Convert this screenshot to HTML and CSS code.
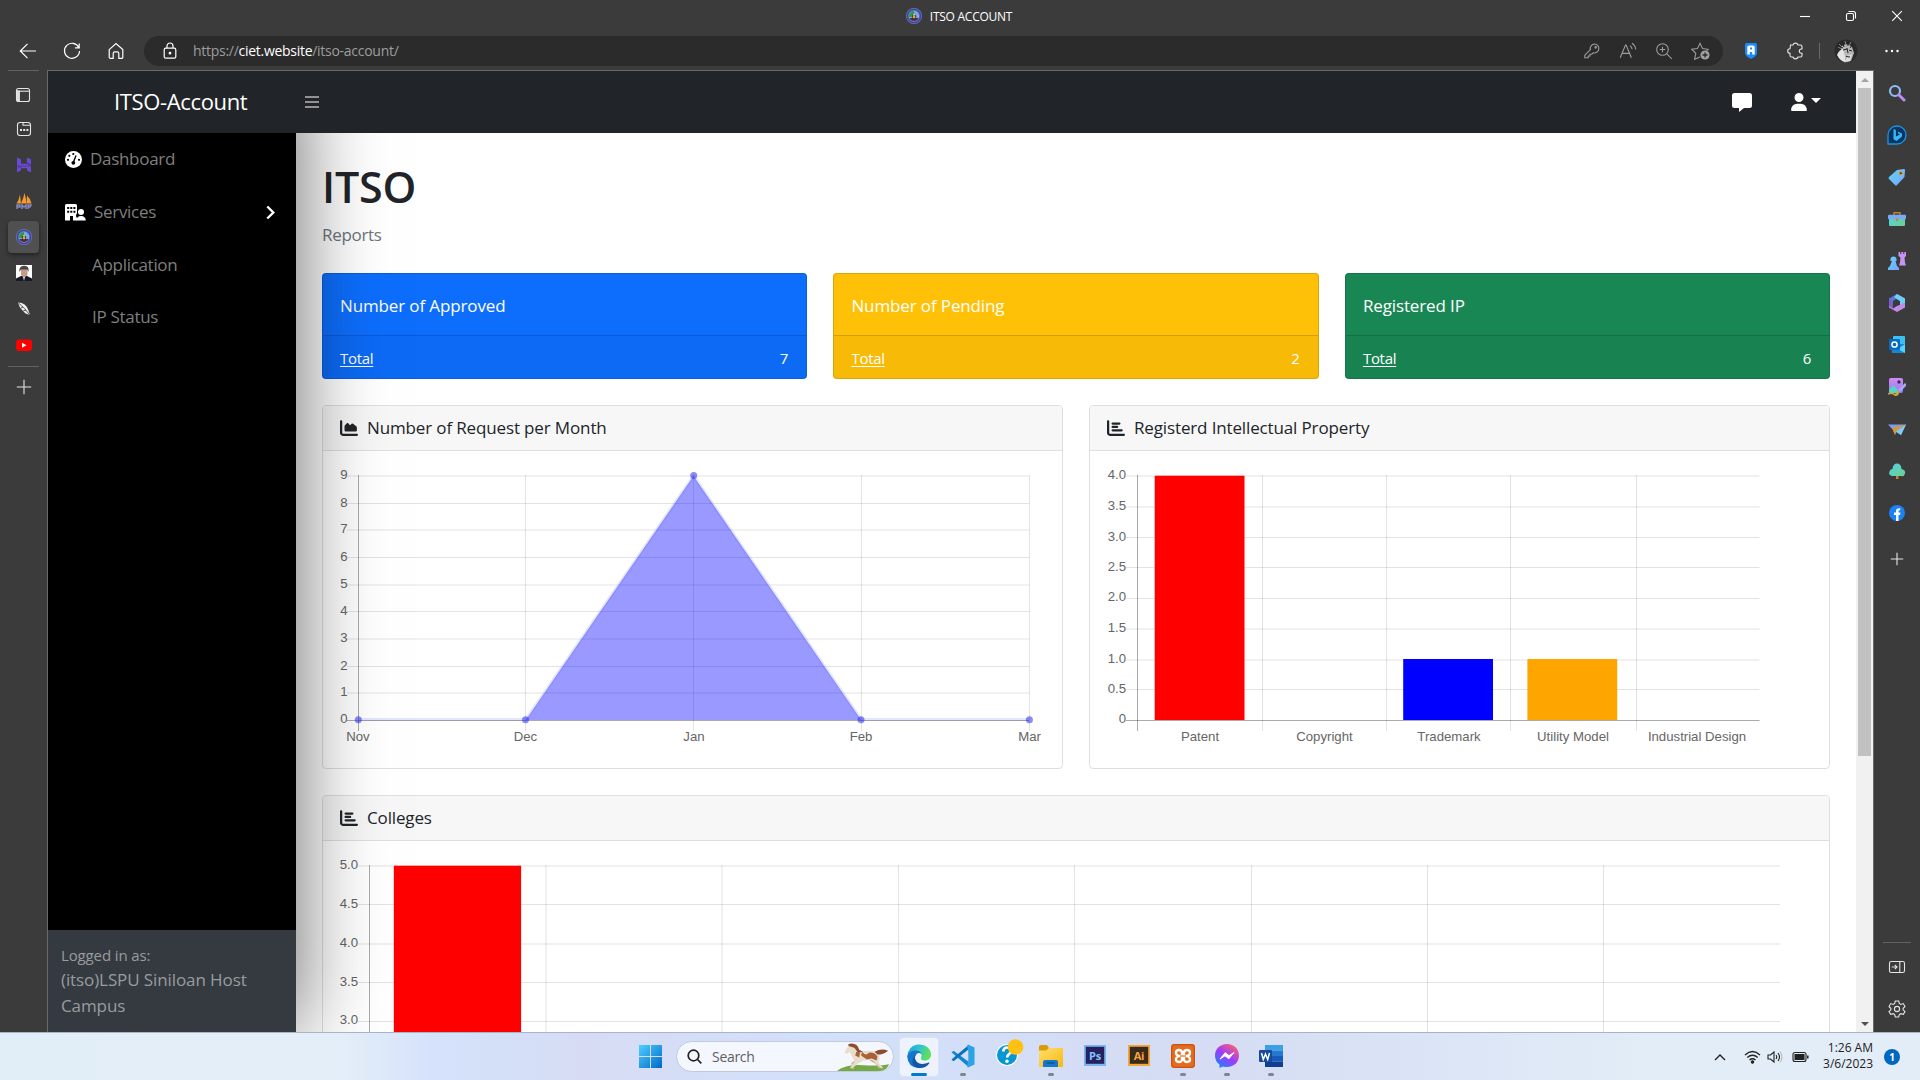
FILE: index.html
```html
<!DOCTYPE html>
<html lang="en">
<head>
<meta charset="utf-8">
<title>ITSO ACCOUNT</title>
<link rel="stylesheet" href="styles.css">
</head>
<body>
<svg class="defs" width="0" height="0" aria-hidden="true">
  <defs>
    <linearGradient id="gBlue" x1="0" y1="0" x2="1" y2="1"><stop offset="0" stop-color="#4fd0ff"/><stop offset="1" stop-color="#0067c8"/></linearGradient>
    <linearGradient id="gSky" x1="0" y1="0" x2="1" y2="1"><stop offset="0" stop-color="#5fd4f5"/><stop offset="1" stop-color="#7aa5ff"/></linearGradient>
    <linearGradient id="gPurple" x1="0" y1="0" x2="0" y2="1"><stop offset="0" stop-color="#d58af5"/><stop offset="1" stop-color="#8f7bf0"/></linearGradient>
    <linearGradient id="gTeal" x1="0" y1="0" x2="1" y2="1"><stop offset="0" stop-color="#4fd3e8"/><stop offset="1" stop-color="#6fd08a"/></linearGradient>
    <linearGradient id="gEdge" x1="0" y1="0" x2="1" y2="0.3"><stop offset="0" stop-color="#1b9de0"/><stop offset=".5" stop-color="#2cc4d0"/><stop offset="1" stop-color="#5ee05a"/></linearGradient>
    <linearGradient id="gMsg" x1="0.1" y1="1" x2="0.8" y2="0"><stop offset="0" stop-color="#0a8dff"/><stop offset=".5" stop-color="#9a3cff"/><stop offset="1" stop-color="#ff6270"/></linearGradient>
    <linearGradient id="gFolder" x1="0" y1="0" x2="1" y2="1"><stop offset="0" stop-color="#ffdf6b"/><stop offset="1" stop-color="#f7b913"/></linearGradient>
    <symbol id="seal" viewBox="0 0 16 16"><circle cx="8" cy="8" r="8" fill="#6b75b8"/><circle cx="8" cy="8" r="6.600" fill="none" stroke="#3a46a0" stroke-width="1.400"/><circle cx="8" cy="8" r="5.200" fill="#7ba7e6"/><path d="M3 9a5.200 5.200 0 0 1 5-6.200V9z" fill="#2f9a4c"/><path d="M3.400 10h9.200a5 5 0 0 1-9.200 0z" fill="#5a2433"/><circle cx="8" cy="8.500" r="2.200" fill="#3e4a3a"/><circle cx="8" cy="9" r="1.200" fill="#e0b13c"/><circle cx="8" cy="6.800" r=".9" fill="#e8e3c0"/></symbol>
    <symbol id="bars" viewBox="0 0 512 512"><path d="M32 32c18 0 32 14 32 32v336c0 9 7 16 16 16h400c18 0 32 14 32 32s-14 32-32 32H80c-44 0-80-36-80-80V64c0-18 14-32 32-32z"/><path d="M128 128c0-18 14-32 32-32h192a32 32 0 0 1 0 64H160c-18 0-32-14-32-32zm32 64h128a32 32 0 0 1 0 64H160a32 32 0 0 1 0-64zm0 96h256a32 32 0 0 1 0 64H160a32 32 0 0 1 0-64z"/></symbol>
  </defs>
</svg>

<div class="screen">
  <header class="titlebar">
    <div class="tab-title"><svg width="16" height="16"><use href="#seal"/></svg><span>ITSO ACCOUNT</span></div>
    <div class="window-controls">
      <svg viewBox="0 0 12 12"><path d="M1 6.500h10"/></svg>
      <svg viewBox="0 0 12 12"><rect x="1.500" y="3.500" width="7" height="7" rx="1.500"/><path d="M3.500 1.500h4.800a2.200 2.200 0 0 1 2.200 2.200v4.800"/></svg>
      <svg viewBox="0 0 12 12"><path d="M1.200 1.200l9.600 9.600M10.800 1.200l-9.600 9.600"/></svg>
    </div>
  </header>

  <div class="toolbar">
    <div class="nav-buttons">
      <svg viewBox="0 0 18 18"><path d="M17 9H1.500M8.500 1.800L1.300 9l7.200 7.200"/></svg>
      <svg viewBox="0 0 18 18"><path d="M15.800 5.600A7.500 7.500 0 1 0 16.500 9M16.200 1.500v4.300h-4.300"/></svg>
      <svg viewBox="0 0 18 18"><path d="M2.200 7.600L9 1.600l6.800 6v7.600a1.200 1.200 0 0 1-1.200 1.200h-2.800v-5a1.600 1.600 0 0 0-1.600-1.600H7.800a1.600 1.600 0 0 0-1.600 1.600v5H3.400a1.200 1.200 0 0 1-1.200-1.200z"/></svg>
    </div>
    <div class="omnibox">
      <svg class="lock" viewBox="0 0 16 18"><rect x="2.200" y="6.200" width="11.600" height="10" rx="1.500"/><path d="M5 6V4a3 3 0 0 1 6 0v2"/><circle cx="8" cy="11.200" r=".8" fill="#fff"/></svg>
      <span class="url">https://<b>ciet.website</b>/itso-account/</span>
      <div class="omni-actions">
        <svg viewBox="0 0 18 18"><path d="M11.500 2a4.500 4.500 0 1 1-1.400 8.800l-1.300 1.400H7v1.800H5.200v1.800H1.800v-2.600l5.600-5.600A4.500 4.500 0 0 1 11.500 2z"/><circle cx="12.700" cy="5.300" r=".8"/></svg>
        <svg viewBox="0 0 18 18"><path d="M1.200 15.800L6.500 3h.6l5.300 12.800M3.200 11.400h7.300M11 3.600c1.300.9 2 2 2.100 3.700M13 1.200c2.300 1.500 3.600 3.500 3.700 6.200"/></svg>
        <svg viewBox="0 0 18 18"><circle cx="7.500" cy="7.500" r="5.800"/><path d="M11.800 11.800l5 5M4.800 7.500h5.400M7.500 4.800v5.400"/></svg>
        <svg class="fav" viewBox="0 0 20 18"><path d="M9 15l-5.400 2.300 1.200-6L.9 7.300l5.600-.7L9 1.300l2.500 5.300 5.600.7-1.500 1.500"/><circle cx="14" cy="13" r="4.600" fill="#a0a0a0" stroke="none"/><path d="M14 10.500v5M11.500 13h5" stroke="#2b2b2b" stroke-width="1.300"/></svg>
      </div>
    </div>
    <div class="extensions">
      <svg viewBox="0 0 16 16"><path d="M2 1.500Q2 0 3.500 0h9Q14 0 14 1.500V10q0 3-6 6-6-3-6-6z" fill="#1a8cff"/><path d="M4.300 11.500v-8l1.500-1h4.400l1.500 1v8H9.200V9H6.800v2.500zM7 4.500v2h2v-2z" fill="#fff" fill-rule="evenodd"/></svg>
      <svg class="line" viewBox="0 0 18 18"><path d="M3.500 3H6a2.600 2.600 0 0 1 5 0h2.500Q15 3 15 4.500V7h-.6a2.100 2.100 0 0 0 0 4.200h.6v2.300q0 1.500-1.500 1.500H11a2.600 2.600 0 0 1-5 0H4.500Q3 15 3 13.500V11.300a2.300 2.300 0 0 1 0-4.600z"/></svg>
      <i class="divider"></i>
      <svg class="avatar" viewBox="0 0 24 24"><circle cx="12" cy="12" r="11.500" fill="#2a2a2a"/><path d="M8 7q5-4 10 1l2 6-3 8-6 1.500-6-5z" fill="#b5b5b5"/><path d="M3 16q2-5 6-6l2 7 0 6q-5-1-8-7z" fill="#e4e4e4"/><path d="M13 17l5-2-2 7-5 1z" fill="#dcdcdc"/><path d="M9 11l4-1M15 11l3 1M12 17.500l4 .5M13 9l1 5M3 6l6 3M8 2l2 6M14 1v6M19 5l-3 4" stroke="#222" stroke-width="1"/><path d="M4 8l4 2M5 5l3 3M11 2l1 5M17 3l-2 4" stroke="#999" stroke-width=".8"/></svg>
      <svg class="dots" viewBox="0 0 16 4"><circle cx="2.500" cy="2" r="1.200"/><circle cx="8" cy="2" r="1.200"/><circle cx="13.500" cy="2" r="1.200"/></svg>
    </div>
  </div>

  <div class="workspace">
    <nav class="tab-strip">
      <div class="tab"><svg class="line" viewBox="0 0 16 16"><rect x="1.500" y="1.500" width="13" height="13" rx="2"/><path d="M1.500 4.200h13"/><path d="M1.500 4h2.800v10H2.500z" fill="#ddd"/></svg></div>
      <div class="tab"><svg class="line" viewBox="0 0 16 16"><rect x="1.500" y="1.500" width="13" height="13" rx="2.500"/><path d="M7 1.500v2.700h7.500"/><path d="M4 9h2M7.200 9h2M10.400 9h2" stroke-width="1.800"/></svg></div>
      <div class="tab"><svg viewBox="0 0 16 16" fill="#6b48d8"><path d="M1 .5l4 2v4.200h6l4 2H1zM11 .5l4 2v5.200l-4-2zM1 8.700v6.800l4-2.200v-2.800zM1 9.200h14v6.300l-4-2v-2.200H5z"/></svg></div>
      <div class="tab"><svg viewBox="0 0 16 16"><path d="M.5 10.500Q3 7 4 1.500l1 9zM5 10.500Q7.500 5 8.500 0q2 6 1.800 10.500zM10.500 10.500l.5-8q3.500 3 4.500 8z" fill="#f29a2e"/><path d="M1 16v-4h3v2H1M6 16v-4l2 2 2-2v4M12 16v-4h3l-1 2h-2" fill="none" stroke="#8586bd" stroke-width="1.500"/></svg></div>
      <div class="tab active"><svg viewBox="0 0 16 16"><use href="#seal"/></svg></div>
      <div class="tab"><svg viewBox="0 0 16 16"><path d="M0 0h16v16H0z" fill="#fff"/><path d="M0 16v-2.500L5 11h6l5 2.500V16z" fill="#171a26"/><path d="M5 4h6.500v6L8 13l-3-3z" fill="#c59a87"/><path d="M3.500 7Q2.500 1 8 .7T12.500 7l-1.200-2.500H5z" fill="#4a4748"/><path d="M7 12h2l-1 4z" fill="#ddd"/></svg></div>
      <div class="tab"><svg viewBox="0 0 16 16"><path d="M2 1.500q8 0 10.500 8L14 14q-5-1-7.500-4.500Q3 6 2 1.500z" fill="#eee"/><path d="M2.500 2Q9 7 14.500 15M5 7l2-1M7 10l3-1" stroke="#333" fill="none" stroke-width=".8"/></svg></div>
      <div class="tab"><svg viewBox="0 0 16 16"><rect y="2.500" width="16" height="11.500" rx="3" fill="#f00"/><path d="M6 5.700v5l4.500-2.500z" fill="#fff"/></svg></div>
      <i class="strip-rule"></i>
      <div class="tab add"><svg class="line" viewBox="0 0 16 16"><path d="M8 .8v14.400M.8 8h14.400"/></svg></div>
    </nav>

    <div class="page">
      <div class="site">
        <nav class="topnav">
          <span class="brand">ITSO-Account</span>
          <svg class="burger" viewBox="0 0 14 12"><path d="M0 1h14M0 6h14M0 11h14"/></svg>
          <svg class="chat" viewBox="0 0 20 19"><path d="M2.500 0h15Q20 0 20 2.500v10q0 2.500-2.500 2.500H12l-5 4v-4H2.500Q0 15 0 12.500v-10Q0 0 2.500 0z"/></svg>
          <svg class="user" viewBox="0 0 448 512"><path d="M224 256a128 128 0 1 0 0-256 128 128 0 1 0 0 256zm-46 48C80 304 0 384 0 482c0 16 13 30 30 30h388c17 0 30-14 30-30 0-98-80-178-178-178z"/></svg>
          <i class="caret"></i>
        </nav>
        <div class="content">
          <aside class="sidenav">
            <ul class="menu">
              <li><svg width="17" height="17" viewBox="0 0 17 17"><circle cx="8.500" cy="8.500" r="8.500" fill="#fff"/><path d="M8.500 11L11 4.500" stroke="#000" stroke-width="1.400"/><circle cx="8.300" cy="11.800" r="1.900"/><circle cx="8.300" cy="3" r="1.100"/><circle cx="4.300" cy="4.800" r="1.100"/><circle cx="3" cy="8.800" r="1.100"/><circle cx="14" cy="8.800" r="1.100"/></svg><span>Dashboard</span></li>
              <li><svg width="21" height="17" viewBox="0 0 21 17"><path d="M1.500 0h9Q12 0 12 1.500V9q-2 3 0 5v2.500H8V12H5v4.500H0v-15Q0 0 1.500 0z" fill="#fff"/><path d="M2.200 3h2v2h-2zm3.100 0h2v2h-2zm3.100 0h2v2h-2zM2.200 6.800h2v2h-2zm3.100 0h2v2h-2zm3.100 0h2v2h-2z"/><circle cx="16" cy="8" r="3" fill="#fff"/><path d="M11.500 16.500q0-4.500 4.500-4.500t4.800 4.500z" fill="#fff"/></svg><span>Services</span><svg class="chevron" viewBox="0 0 9 15"><path d="M1.300 1.500l6 6-6 6"/></svg></li>
              <li class="sub"><span>Application</span></li>
              <li class="sub"><span>IP Status</span></li>
            </ul>
            <div class="login"><small>Logged in as:</small><span>(itso)LSPU Siniloan Host Campus</span></div>
          </aside>

          <main>
            <h1>ITSO</h1>
            <p class="crumb">Reports</p>
            <div class="stats">
              <section class="stat blue"><h2>Number of Approved</h2><div><a>Total</a><span>7</span></div></section>
              <section class="stat yellow"><h2>Number of Pending</h2><div><a>Total</a><span>2</span></div></section>
              <section class="stat green"><h2>Registered IP</h2><div><a>Total</a><span>6</span></div></section>
            </div>
            <div class="charts">
              <section class="card">
                <h3><svg viewBox="0 0 512 512"><path d="M32 32c18 0 32 14 32 32v336c0 9 7 16 16 16h400c18 0 32 14 32 32s-14 32-32 32H80c-44 0-80-36-80-80V64c0-18 14-32 32-32z"/><path d="M128 330V206q0-12 8-22l58-66q20-20 40 0l36 42q18 16 32 0l28-26q22-18 42 4l96 76q12 10 12 26v90q0 22-22 22H150q-22 0-22-22z"/></svg><span>Number of Request per Month</span></h3>
                <svg class="chart" viewBox="323 451 739 317" width="739" height="317">
                  <g class="grid"><path d="M347 476h682M347 503.500h682M347 530h682M347 557.500h682M347 585h682M347 611.500h682M347 639h682M347 666.500h682M347 693h682"/><path d="M525.500 475v256M693.500 475v256M861.500 475v256M1029.500 475v256"/></g>
                  <path class="zero" d="M358.500 475v256M347 720.500h682"/>
                  <path d="M525.800 720L693.500 476 861.200 720z" class="area"/>
                  <path d="M358.700 719.500H525.800L693.500 476 861.200 719.500H1029" class="trend"/>
                  <g class="points"><circle cx="358.300" cy="719.700" r="3.500"/><circle cx="525.500" cy="719.700" r="3.500"/><circle cx="693.700" cy="475.500" r="3.500"/><circle cx="861" cy="719.700" r="3.500"/><circle cx="1029.400" cy="719.700" r="3.500"/></g>
                  <g class="ylab"><text x="347.500" y="479">9</text><text x="347.500" y="507">8</text><text x="347.500" y="533">7</text><text x="347.500" y="561">6</text><text x="347.500" y="588">5</text><text x="347.500" y="615">4</text><text x="347.500" y="642">3</text><text x="347.500" y="670">2</text><text x="347.500" y="696">1</text><text x="347.500" y="723">0</text></g>
                  <g class="xlab"><text x="358" y="741">Nov</text><text x="525.500" y="741">Dec</text><text x="694" y="741">Jan</text><text x="861" y="741">Feb</text><text x="1029.500" y="741">Mar</text></g>
                </svg>
              </section>
              <section class="card">
                <h3><svg><use href="#bars"/></svg><span>Registerd Intellectual Property</span></h3>
                <svg class="chart" viewBox="1090 451 739 317" width="739" height="317">
                  <g class="grid"><path d="M1126 476h633.500M1126 507h633.500M1126 537.500h633.500M1126 567.500h633.500M1126 598.500h633.500M1126 629h633.500M1126 660h633.500M1126 689.500h633.500"/><path d="M1262.500 475v256M1386.500 475v256M1510.500 475v256M1636.500 475v256"/></g>
                  <path class="zero" d="M1137.500 475v256M1126 720.500h633.500"/>
                  <rect x="1154.700" y="475.700" width="89.800" height="244.300" fill="#f00"/><rect x="1403.200" y="659" width="89.800" height="61" fill="#00f"/><rect x="1527.400" y="659" width="89.800" height="61" fill="#ffa500"/>
                  <g class="ylab"><text x="1126" y="479">4.0</text><text x="1126" y="510">3.5</text><text x="1126" y="541">3.0</text><text x="1126" y="571">2.5</text><text x="1126" y="601">2.0</text><text x="1126" y="632">1.5</text><text x="1126" y="663">1.0</text><text x="1126" y="693">0.5</text><text x="1126" y="723">0</text></g>
                  <g class="xlab"><text x="1200" y="741">Patent</text><text x="1324.500" y="741">Copyright</text><text x="1449" y="741">Trademark</text><text x="1573" y="741">Utility Model</text><text x="1697" y="741">Industrial Design</text></g>
                </svg>
              </section>
              <section class="card wide">
                <h3><svg><use href="#bars"/></svg><span>Colleges</span></h3>
                <svg class="chart" viewBox="323 841 1506 300" width="1506" height="300">
                  <g class="grid"><path d="M358 866h1422M358 904.500h1422M358 944h1422M358 982.500h1422M358 1021.500h1422"/><path d="M546 865v270M722 865v270M898.500 865v270M1074.500 865v270M1251.500 865v270M1427.500 865v270M1603.500 865v270"/></g>
                  <path class="zero" d="M369.500 865v270"/>
                  <rect x="393.800" y="865.700" width="127.300" height="270" fill="#f00"/>
                  <g class="ylab"><text x="358" y="869">5.0</text><text x="358" y="908">4.5</text><text x="358" y="947">4.0</text><text x="358" y="986">3.5</text><text x="358" y="1024">3.0</text></g>
                </svg>
              </section>
            </div>
          </main>
        </div>
      </div>
      <div class="scrollbar"><i class="up"></i><i class="thumb"></i><i class="down"></i></div>
    </div>

    <aside class="edge-sidebar">
      <svg viewBox="0 0 18 18"><circle cx="7" cy="7" r="5" fill="none" stroke="#8fbcf5" stroke-width="2.200"/><path d="M11 11l5 5" stroke="#c48af0" stroke-width="3" stroke-linecap="round"/></svg>
      <svg class="big" viewBox="0 0 20 20"><path d="M1 19V10a9 9 0 1 1 9 9z" fill="#0b3560" stroke="#1596e8" stroke-width="1.300"/><path d="M6.500 4l2.400.9v6.500l4.100-2-1.700-.8-.8-2 4.500 1.800v3.200L9.500 16l-3-1.800z" fill="#35b8f5"/></svg>
      <svg viewBox="0 0 18 18"><path d="M9 2l7-1q1 0 1 1l-.5 7L9 17q-1 1-2 0l-6-6q-1-1 0-2z" fill="url(#gSky)"/><circle cx="12.800" cy="5.200" r="1.700" fill="#6b4b10" stroke="#e9a826"/></svg>
      <svg viewBox="0 0 18 18"><path d="M6 5V2.800h6V5" fill="none" stroke="#c28420" stroke-width="1.400"/><rect x="1" y="7" width="16" height="9" rx="1" fill="url(#gTeal)"/><rect y="4.800" width="18" height="4.500" rx="1" fill="#79aaf5"/><circle cx="9" cy="9.700" r="1.500" fill="#c88c20"/></svg>
      <svg viewBox="0 0 18 18"><path d="M10.500 0h1.800v2h1V0h2v2h1V0H18v4l-1.500 1.500.5 5 1 3h-7l1-3 .5-5L10.500 4z" fill="#c993f4"/><path d="M0 18v-2l2-2 2-5H2.500V7.500a3 3 0 1 1 6 0V9H7.500l1.500 5 2 2v2z" fill="url(#gSky)"/></svg>
      <svg viewBox="0 0 18 18"><path d="M9 0l8 4.500V10l-5-3-4-2-3 2v7L1 11.500v-7z" fill="#5579de"/><path d="M9 0l8 4.500V9l-5 3V7L6 3z" fill="#72cff4"/><path d="M1 11.500l4 3 4-2.500 8-3v4.500L9 18l-8-4.500z" fill="#c18aeb"/><path d="M1 5l4 2v6.500l-4-1.500z" fill="#7760cd"/></svg>
      <svg viewBox="0 0 18 18"><rect x="5" y="0" width="12" height="10" rx="1" fill="#3ac3f2"/><path d="M3 8h14v9H4z" fill="#1686d6"/><path d="M17 8l-7 5 7 4z" fill="#53d7ff"/><rect x="1" y="3" width="11" height="11" rx="1" fill="#0869c3"/><circle cx="6.500" cy="8.500" r="2.600" fill="none" stroke="#fff" stroke-width="1.500"/></svg>
      <svg viewBox="0 0 18 18"><rect x="1" width="14" height="15" rx="2" fill="url(#gPurple)"/><path d="M1 12l4-5 5 5v3H1z" fill="#57d2c5"/><circle cx="11" cy="4" r="1.700" fill="#353253"/><path d="M18 6l-7 7" stroke="#a5a7f7" stroke-width="2.800"/><path d="M0 16q4-2 7 1l3-3q1 3-3 3.500" stroke="#dda236" stroke-width="1.500" fill="none"/></svg>
      <svg viewBox="0 0 18 18"><path d="M0 4.500h18L13 15l-5-3-1 3-2-5z" fill="#7f9cf0"/><path d="M4 8l14-3.500-10 7-1 3.500-2-5z" fill="#d79935"/><path d="M18 4.500L13 15l-5-3.500z" fill="#7ccbf8"/></svg>
      <svg viewBox="0 0 18 18"><path d="M8 11h2.500v6H8z" fill="#c88723"/><path d="M4 14q-4-1-2.500-4.500Q2 7 4.500 7 5 1.500 9 1.500T13.500 7Q18 8 17 11.500T13 14z" fill="url(#gTeal)"/></svg>
      <svg viewBox="0 0 18 18"><circle cx="9" cy="9" r="8" fill="#1b83f5"/><path d="M8 17v-6H6V8.500h2V7q0-3.200 4.200-2.800v2Q10.500 6 10.500 7.500v1h2L12 11h-1.500v6z" fill="#fff"/></svg>
      <svg class="line plus" viewBox="0 0 14 14"><path d="M7 .8v12.400M.8 7h12.400"/></svg>
      <i class="strip-rule"></i>
      <svg class="line" viewBox="0 0 18 18"><rect x="1.500" y="3.500" width="15" height="11" rx="1.800"/><path d="M11.800 3.500v11M3.800 9h5M6.800 6.800L9 9l-2.200 2.200"/></svg>
      <svg class="line" viewBox="0 0 18 18"><path d="M7.300 1h3.400l.6 2.500 1.500.9 2.500-.8L17 6.600l-1.900 1.700v1.500L17 11.500l-1.700 2.900-2.500-.7-1.500.8-.6 2.500H7.300l-.6-2.500-1.500-.8-2.500.7L1 11.500l1.900-1.700V8.300L1 6.600l1.700-3 2.500.8 1.500-.9z"/><circle cx="9" cy="9" r="2.600"/></svg>
    </aside>
  </div>

  <footer class="taskbar">
    <svg class="start" viewBox="0 0 23 23"><path d="M0 0h11v11H0zM12 0h11v11H12zM0 12h11v11H0zM12 12h11v11H12z" fill="url(#gBlue)"/></svg>
    <div class="search">
      <svg class="lens" viewBox="0 0 15 15"><circle cx="6.500" cy="6.500" r="5.300"/><path d="M10.500 10.500l3.800 3.800"/></svg>
      <span>Search</span>
      <svg class="horse" viewBox="0 0 54 30"><path d="M0 29q9-7 27-6T54 22q-2 5-7 7z" fill="#75a945"/><path d="M34 17l7 4 3 5M21 18l-5 3 1 6" fill="none" stroke="#c9b096" stroke-width="1.800"/><path d="M8 10l3-6 4-3 5 4 5 4q8-2 15 0l4 3 0 5-1 3 5 6h-2.500l-5.500-5-3-4-9 1-6 3-6 5h-2.500l5-7-3-5-2-5-3 2z" fill="#eadccb"/><path d="M26 9q4 5 7 1 6-1 9 4l-1 4-5-2-5 1-6-4zM20 9l4 1-1 5-4-2z" fill="#a86239"/><path d="M12 1q9-2 11 6l4 2-5 1-4-5-6-2zM39 9q7-4 14-1-5 4-11 4z" fill="#894e32"/></svg>
    </div>
    <div class="apps">
      <div class="app current"><svg viewBox="0 0 24 24"><path d="M.5 13A11.500 11.500 0 0 1 12 .5C19 .5 24 5 24 10.500c0 4-3 6-6.500 6-2.500 0-4-1-3.500-2.500 1-2 1-5-3-6C6 6.800 2 9 .5 13z" fill="url(#gEdge)"/><path d="M.2 12.500Q2 7 7.500 6.600 13 6.400 14.800 10q-3-2-5.300 0-3 3-.5 7.500 3 4.500 12.500 2Q17 24.500 11 24 1 23 .2 12.500z" fill="#1577cb"/><path d="M9.500 10q-3 3-.5 7 4 5 13 1.500.8 0 .2 1Q19 24 12 24 3 22 6 14q1-3 3.500-4z" fill="#1358a4"/></svg></div>
      <div class="app open"><svg viewBox="0 0 24 24"><path d="M17.500 23L2.500 10 .5 8.500 2.500 6.800 18 18z" fill="#1286d2"/><path d="M.5 15.500l2 1.700L18 5V.8z" fill="#0870bd"/><path d="M17 .5l6.500 3v17l-6.500 3-1-1.500 1.300-5V7L16 2z" fill="#2ca3e8"/></svg></div>
      <div class="app"><svg class="help" viewBox="0 0 28 28"><circle cx="11" cy="16" r="11" fill="#fff"/><circle cx="11" cy="16" r="10" fill="#0796d4"/><path d="M7.200 12.500q.4-4 4-4t4 3.200q0 2-2.200 3.500-1.800 1.200-1.800 3.300" fill="none" stroke="#fff" stroke-width="2.700"/><circle cx="11" cy="22.300" r="1.700" fill="#fff"/><circle cx="19.500" cy="8" r="7.800" fill="#ffc012"/></svg></div>
      <div class="app open"><svg viewBox="0 0 24 24"><path d="M0 3q0-2 2-2h6l2 3v4H0z" fill="#d99a0b"/><path d="M0 6.500h7L10 4h14v19H0z" fill="url(#gFolder)"/><path d="M4 23v-5q0-2 2-2h11q2 0 2 2v5z" fill="#1477cb"/><path d="M7.500 19h8" stroke="#07559c" stroke-width="1.500"/></svg></div>
      <div class="app"><svg viewBox="0 0 24 24"><rect x="1" y="1" width="22" height="21" fill="#78b6ef"/><rect x="2.800" y="2.800" width="18.400" height="17" fill="#27205f"/><text class="adobe ps" x="12" y="15.500">Ps</text></svg></div>
      <div class="app"><svg viewBox="0 0 24 24"><rect x="1" y="1" width="22" height="21" fill="#f4a638"/><rect x="2.800" y="2.800" width="18.400" height="17" fill="#3a2a1b"/><text class="adobe ai" x="12" y="15.500">Ai</text></svg></div>
      <div class="app open"><svg viewBox="0 0 24 24"><rect width="24" height="24" rx="3" fill="#e66b1c"/><rect x=".7" y=".7" width="22.600" height="22.600" rx="2.500" fill="none" stroke="#c04f0f"/><path d="M8 12q-3-1-3-3.300Q5 6 8 6t3 3v6q0 3-3 3t-3-2.700Q5 13 8 12h8q3-1 3-3.300Q19 6 16 6t-3 3v6q0 3 3 3t3-2.700Q19 13 16 12" fill="none" stroke="#fff" stroke-width="2.300"/><path d="M9 12h6" stroke="#e66b1c" stroke-width="1.200"/></svg></div>
      <div class="app open"><svg viewBox="0 0 24 24"><path d="M12 0c7 0 12 5 12 11.500S19 23 12 23q-2 0-4-.6L4.500 24V20.500Q0 17.500 0 11.500C0 5 5 0 12 0z" fill="url(#gMsg)"/><path d="M5 15l5.200-6.300 3.800 3 5-3.200-5.200 6.300-3.800-3z" fill="#fff" stroke="#fff"/></svg></div>
      <div class="app open"><svg viewBox="0 0 24 24"><path d="M6 1h18v5.500H6z" fill="#3ba0e6"/><path d="M6 6.500h18V12H6z" fill="#2378d0"/><path d="M6 12h18v5.500H6z" fill="#165bbb"/><path d="M6 17.500h18V23H6z" fill="#103f91"/><rect y="6" width="13" height="12" rx="1" fill="#174a9c"/><path d="M2.500 9l1.800 6.500L6.500 10l2.200 5.500L10.500 9" fill="none" stroke="#fff" stroke-width="1.500"/></svg></div>
    </div>
    <div class="tray">
      <svg width="12" height="8" viewBox="0 0 12 8"><path d="M1 7l5-5 5 5" stroke-width="1.400"/></svg>
      <svg width="17" height="14" viewBox="0 0 17 14"><path d="M1 5q7.500-7 15 0M3.300 7.500q5.200-4.600 10.400 0M5.500 10q3-2.600 6 0" stroke-width="1.300"/><circle cx="8.500" cy="12" r="1.200" fill="#222"/></svg>
      <svg width="17" height="14" viewBox="0 0 17 14"><path d="M1 5h2.500L7 2v10L3.500 9H1zM9 5q1.500 2 0 4M11 3q3 4 0 8"/><path d="M13 1.500q4 5.500 0 11" stroke="#bbb"/></svg>
      <svg width="17" height="12" viewBox="0 0 17 12"><rect x="1" y="1.500" width="13" height="9" rx="2"/><path d="M3 3.500h9v5H3z" fill="#222"/><path d="M15.800 4.500v3" stroke-width="1.500"/></svg>
      <div class="clock"><span>1:26 AM</span><span>3/6/2023</span></div>
      <b class="badge">1</b>
    </div>
  </footer>
</div>
</body>
</html>
```
FILE: styles.css
```css
* { box-sizing: border-box; }
body { margin: 0; font-family: "Open Sans", "Noto Sans", sans-serif; overflow: hidden; }
h1, h2, h3, p, ul { margin: 0; padding: 0; font-weight: 400; }
i { display: block; }
svg { display: block; flex: none; }
.defs { height: 0; }
.screen { width: 1920px; height: 1080px; display: flex; flex-direction: column; background: #3b3b3b; overflow: hidden; }

/* browser chrome */
.titlebar { height: 32px; display: grid; grid-template-columns: 1fr auto 1fr; align-items: center; flex: none; }
.tab-title { grid-column: 2; display: flex; align-items: center; gap: 8px; color: #fff; font-size: 12px; letter-spacing: -.25px; margin-right: 2px; }
.window-controls { display: flex; justify-content: flex-end; gap: 34px; padding-right: 17px; }
.window-controls svg { width: 12px; height: 12px; fill: none; stroke: #fff; stroke-width: 1.1; }
.toolbar { height: 38px; padding: 4px 0 0 6px; display: flex; flex: none; align-items: flex-start; }
.nav-buttons { display: flex; width: 138px; height: 30px; align-items: center; }
.nav-buttons svg { width: 18px; height: 18px; margin: 0 13px; fill: none; stroke: #fff; stroke-width: 1.2; }
.omnibox { width: 1579px; height: 30px; border-radius: 15px; background: #2b2b2b; display: flex; align-items: center; padding: 0 5px 0 18px; }
.lock { width: 16px; height: 18px; fill: none; stroke: #fff; stroke-width: 1.2; }
.url { margin-left: 15px; padding-bottom: 1px; font-size: 14px; letter-spacing: -.28px; color: #9d9d9d; }
.url b { font-weight: 400; color: #fff; }
.omni-actions { display: flex; margin-left: auto; }
.omni-actions svg { height: 18px; width: 20px; margin: 0 8px; fill: none; stroke: #9c9c9c; stroke-width: 1.1; }
.omni-actions .fav { margin: 0 7px 0 9px; }
.extensions { display: flex; align-items: center; height: 30px; padding-left: 20px; }
.extensions > svg { width: 16px; height: 16px; }
.extensions > .line { width: 18px; height: 18px; margin-left: 28px; }
.divider { width: 1px; height: 16px; background: #696969; margin-left: 14px; }
.extensions > .avatar { width: 24px; height: 24px; margin-left: 14px; }
.extensions > .dots { width: 16px; height: 4px; margin-left: 26px; fill: #fff; }
.line { fill: none; stroke: #e5e5e5; stroke-width: 1.1; }

.workspace { height: 962px; flex: none; display: flex; }
.tab-strip { width: 47px; padding: 0 8px; display: flex; flex-direction: column; }
.tab-strip::before { content: ""; height: 1px; background: #626262; margin-bottom: 8px; width: 31px; }
.tab { width: 31px; height: 32px; margin-bottom: 4px; display: flex; align-items: center; justify-content: center; border-radius: 4px; flex: none; }
.tab svg { width: 16px; height: 16px; }
.tab:first-of-type { margin-bottom: 2px; padding-right: 1px; }
.tab.active { background: #505050; box-shadow: 0 2px 4px #222; }
.strip-rule { height: 1px; background: #626262; flex: none; }
.tab-strip .strip-rule { width: 31px; margin: 1px 0 4px; }
.page { width: 1827px; flex: none; border: 1px solid #6a6a6a; border-bottom: 0; display: flex; overflow: hidden; background: #fff; }
.edge-sidebar { width: 46px; padding-top: 14px; display: flex; flex-direction: column; align-items: center; }
.edge-sidebar > svg { width: 18px; height: 18px; margin-bottom: 24px; }
.edge-sidebar > svg.big { width: 20px; height: 20px; margin: -1px 0 23px; }
.edge-sidebar > .plus { width: 14px; height: 14px; margin-top: 6px; }
.edge-sidebar .strip-rule { width: 28px; margin: auto 0 15px; }
.edge-sidebar > svg:last-child { margin-bottom: 14px; }
.scrollbar { width: 17px; background: #f1f1f1; display: flex; flex-direction: column; align-items: center; padding: 7px 0 6px; }
.scrollbar .up { border: 4px solid transparent; border-top: 0; border-bottom: 4px solid #a3a3a3; }
.scrollbar .thumb { width: 13px; height: 668px; background: #c1c1c1; margin-top: 6px; }
.scrollbar .down { border: 4px solid transparent; border-bottom: 0; border-top: 4px solid #505050; margin-top: auto; }

/* dashboard */
.site { width: 1808px; display: flex; flex-direction: column; color: #212529; font-size: 17px; letter-spacing: -.3px; }
.topnav { height: 62px; flex: none; background: #212529; display: flex; align-items: center; position: relative; z-index: 3; padding-right: 35px; }
.brand { color: #fff; font-size: 22px; letter-spacing: -.35px; width: 257px; padding: 0 0 2px 66px; white-space: nowrap; }
.burger { width: 14px; height: 12px; stroke: #909294; stroke-width: 1.8; }
.chat { width: 20px; height: 19px; fill: #fff; margin-left: auto; }
.user { width: 16px; height: 18px; fill: #fff; margin-left: 39px; }
.caret { border: 5px solid transparent; border-bottom: 0; border-top-color: #fff; margin: -3px 0 0 4px; }
.content { display: flex; height: 899px; }
.sidenav { width: 248px; margin-top: -62px; padding-top: 62px; background: #000; box-shadow: 0 0 80px rgba(0,0,0,.6); z-index: 2; display: flex; flex-direction: column; flex: none; color: #7f7f7f; }
.menu { list-style: none; }
.menu li { height: 52.7px; display: flex; align-items: center; padding: 0 21px 0 17px; gap: 8px; }
.menu span { padding-bottom: 1px; }
.menu .sub { padding-left: 44px; }
.chevron { width: 9px; height: 15px; margin-left: auto; fill: none; stroke: #fff; stroke-width: 2.4; }
.login { margin-top: auto; height: 102px; background: #343a40; color: #999c9f; padding: 13px 13px 0; display: flex; flex-direction: column; line-height: 26px; letter-spacing: -.1px; }
.login small { font-size: 15px; line-height: 24px; letter-spacing: -.13px; }
main { flex: none; width: 1560px; padding: 27px 26px 0; }
h1 { font-size: 43px; line-height: 54px; font-weight: 600; letter-spacing: -.2px; }
.crumb { color: #6c757d; line-height: 26px; margin: 8px 0 25px; }
.stats { display: grid; grid-template-columns: repeat(3, 1fr); gap: 26.4px; height: 106px; }
.stat { border: 1px solid rgba(0,0,0,.14); border-radius: 4px; color: #fff; display: flex; flex-direction: column; }
.stat h2 { font-size: 17px; letter-spacing: -.13px; flex: 1; padding: 2px 17px 0; display: flex; align-items: center; }
.stat div { height: 43px; border-top: 1px solid rgba(0,0,0,.14); background: rgba(0,0,0,.03); display: flex; justify-content: space-between; align-items: center; padding: 1px 18px 0 17px; font-size: 15px; }
.stat a { text-decoration: underline; text-underline-offset: 2px; text-decoration-thickness: 1px; }
.blue { background: #0d6efd; }
.yellow { background: #ffc107; }
.green { background: #198754; }
.charts { display: grid; grid-template-columns: 1fr 1fr; gap: 26px; margin-top: 26px; }
.card { border: 1px solid #dfdfdf; border-radius: 4px; overflow: hidden; background: #fff; }
.wide { grid-column: 1 / 3; }
.card h3 { height: 45px; background: #f7f7f7; border-bottom: 1px solid #dfdfdf; font-size: 17px; letter-spacing: -.14px; display: flex; align-items: center; gap: 9px; padding-left: 17px; }
.card h3 svg { width: 18px; height: 18px; fill: #212529; }
.card h3 span { padding-bottom: 1px; }
.chart { font: 13.2px "Liberation Sans", Arial, sans-serif; letter-spacing: 0; }
.grid { stroke: rgba(0,0,0,.11); fill: none; }
.zero { stroke: rgba(0,0,0,.33); fill: none; }
.area { fill: rgba(0,0,255,.4); }
.trend { fill: none; stroke: rgba(40,60,255,.13); stroke-width: 3; }
.points { fill: rgba(45,45,240,.55); }
.chart text { fill: #666; }
.ylab { text-anchor: end; }
.xlab { text-anchor: middle; }

/* desktop taskbar */
.taskbar { height: 48px; flex: none; border-top: 1px solid #a9b3c6; background: linear-gradient(90deg, #e2eef7 0, #e4eef8 340px, #d6e2fb 430px, #d3e0f8 500px, #d7dcf4 580px, #d2e0fa 820px, #d5dcf3 1200px, #dce5f6 1450px, #e2edf7 1660px); display: flex; align-items: center; padding: 0 20px 0 639px; }
.start { width: 23px; height: 23px; }
.search { width: 218px; height: 31px; margin-left: 14px; border: 1px solid #c0c9df; border-radius: 16px; background: #f4f7fe; display: flex; align-items: center; padding-left: 10px; overflow: hidden; }
.lens { width: 15px; height: 15px; fill: none; stroke: #222; stroke-width: 1.7; }
.search span { margin-left: 10px; padding-bottom: 1px; font-size: 14px; letter-spacing: -.3px; color: #606060; }
.horse { width: 54px; height: 29px; margin: 1px 3px 0 auto; }
.apps { display: flex; margin-left: 6px; gap: 6px; }
.app { width: 38px; height: 38px; display: flex; flex-direction: column; align-items: center; justify-content: space-between; padding: 6px 0 0; border-radius: 4px; }
.app svg { width: 24px; height: 24px; }
.app .help { width: 28px; height: 28px; margin: -5px 0 0 5px; }
.app::after { content: ""; width: 6px; height: 3px; border-radius: 2px; }
.open::after { background: #7d8592; }
.current { background: #edf2fc; box-shadow: 0 0 0 1px #dce4f3; }
.current::after { width: 16px; background: #0078d4; }
.adobe { font: bold 11px "Open Sans", sans-serif; text-anchor: middle; letter-spacing: -.3px; }
.ps { fill: #82c4ff; }
.ai { fill: #f6a63b; }
.tray { margin-left: auto; display: flex; align-items: center; }
.tray svg { fill: none; stroke: #222; stroke-width: 1.1; }
.tray svg:nth-child(1) { margin-right: 18px; }
.tray svg:nth-child(2) { margin-right: 6px; }
.tray svg:nth-child(3) { margin-right: 8px; }
.clock { width: 64px; display: flex; flex-direction: column; align-items: flex-end; font-size: 12px; line-height: 16px; color: #222; margin-right: 11px; padding-bottom: 1px; }
.badge { width: 16px; height: 16px; border-radius: 50%; background: #0067c0; color: #fff; font-size: 10px; line-height: 16px; text-align: center; }
```
